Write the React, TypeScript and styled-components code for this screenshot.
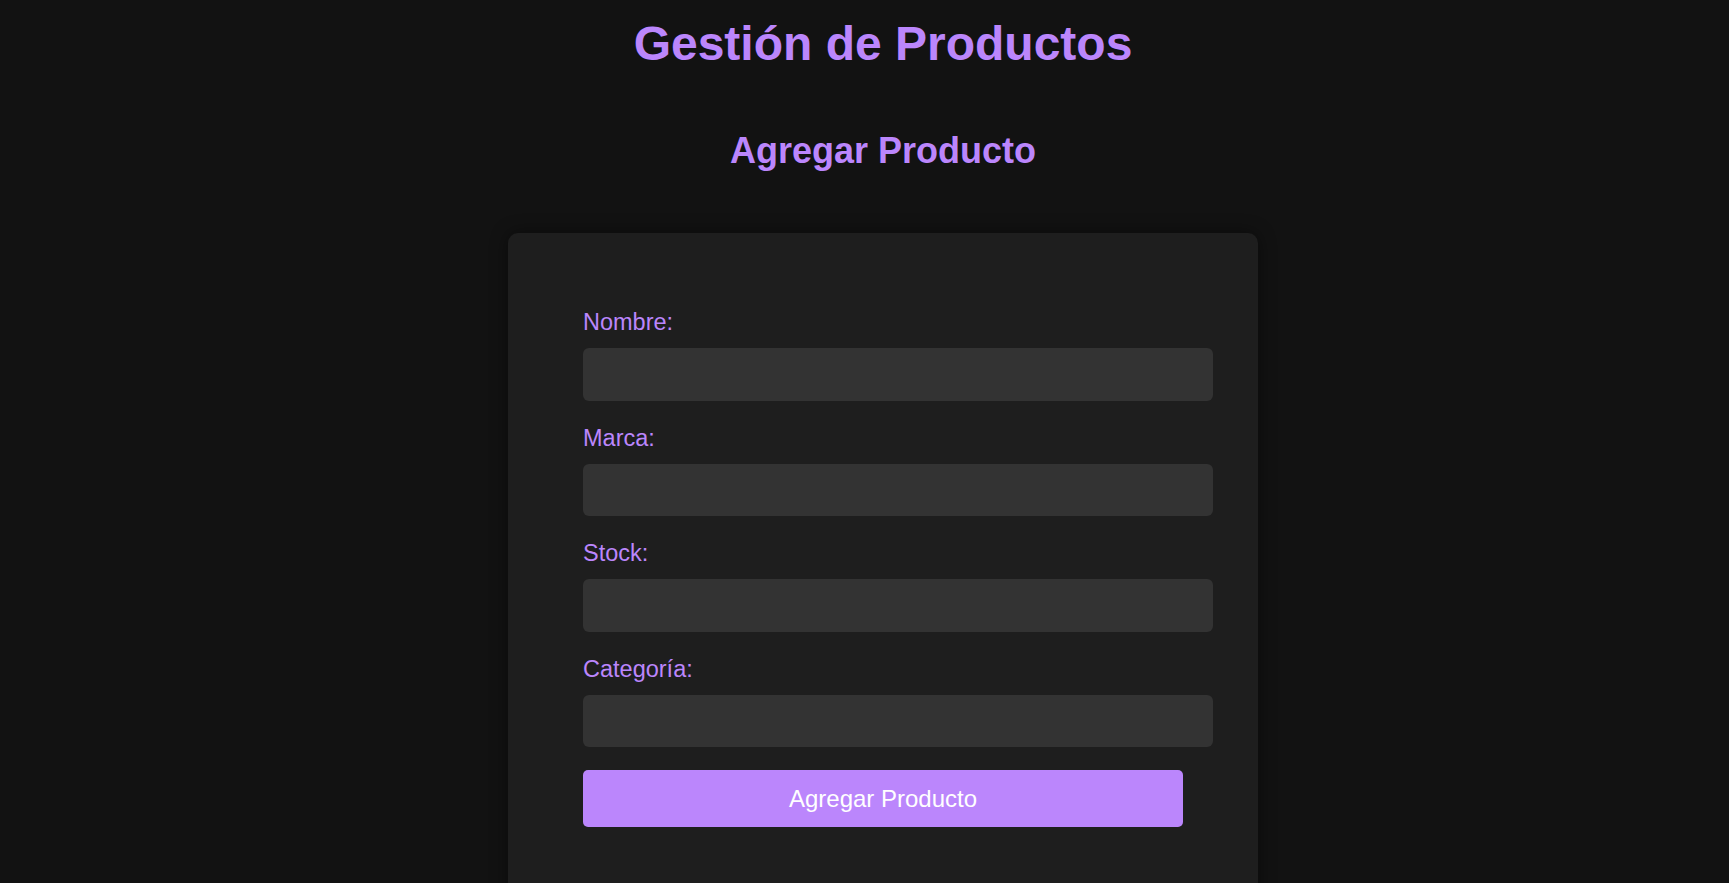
import React from "react";
import styled, { createGlobalStyle } from "styled-components";

const GlobalStyle = createGlobalStyle`
  html, body {
    margin: 0;
    padding: 0;
    background: #121212;
    overflow: hidden;
  }
  body {
    font-family: "Liberation Sans", Arial, sans-serif;
    color: #e0e0e0;
  }
  * { font-family: inherit; }
`;

const Page = styled.div`
  display: flex;
  flex-direction: column;
  align-items: center;
  padding: 15.5px 0 0 37px;
  min-height: 100vh;
  box-sizing: border-box;
`;

const Title = styled.h1`
  margin: 0;
  font-size: 48px;
  line-height: 1.149;
  font-weight: 700;
  color: #bb86fc;
  text-align: center;
`;

const Subtitle = styled.h2`
  margin: 59.5px 0 0;
  font-size: 36px;
  line-height: 1.149;
  font-weight: 700;
  color: #bb86fc;
  text-align: center;
`;

const Card = styled.form`
  margin-top: 61px;
  width: 600px;
  padding: 75px;
  background: #1e1e1e;
  border-radius: 10px;
  box-shadow: 0 0 18px rgba(0, 0, 0, 0.45);
  display: flex;
  flex-direction: column;
`;

const Label = styled.label`
  display: block;
  font-size: 23.5px;
  line-height: 27px;
  color: #bb86fc;
  padding-top: 1.5px;
  margin-bottom: 12.3px;
`;

const Input = styled.input`
  display: block;
  width: 100%;
  height: 52.4px;
  padding: 0 15px;
  box-sizing: content-box;
  margin: 0 0 22.4px;
  border: none;
  border-radius: 6px;
  background: #333333;
  color: #ffffff;
  font-size: 20px;
  outline: none;
`;

const SubmitButton = styled.button`
  width: 100%;
  height: 57px;
  margin-top: 0.6px;
  border: none;
  border-radius: 5px;
  background: #bb86fc;
  color: #ffffff;
  font-size: 24px;
  cursor: pointer;
`;

const fields = [
  { id: "nombre", label: "Nombre:" },
  { id: "marca", label: "Marca:" },
  { id: "stock", label: "Stock:" },
  { id: "categoria", label: "Categoría:" },
];

export default function App() {
  return (
    <>
      <GlobalStyle />
      <Page>
        <Title>Gestión de Productos</Title>
        <Subtitle>Agregar Producto</Subtitle>
        <Card onSubmit={(e) => e.preventDefault()}>
          {fields.map((f) => (
            <div key={f.id}>
              <Label htmlFor={f.id}>{f.label}</Label>
              <Input id={f.id} type="text" />
            </div>
          ))}
          <SubmitButton type="submit">Agregar Producto</SubmitButton>
        </Card>
      </Page>
    </>
  );
}
